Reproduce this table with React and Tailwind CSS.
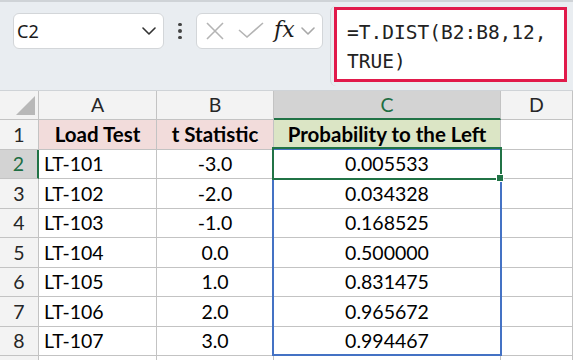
import React from "react";

const data = [
  ["LT-101", "-3.0", "0.005533"],
  ["LT-102", "-2.0", "0.034328"],
  ["LT-103", "-1.0", "0.168525"],
  ["LT-104", "0.0", "0.500000"],
  ["LT-105", "1.0", "0.831475"],
  ["LT-106", "2.0", "0.965672"],
  ["LT-107", "3.0", "0.994467"],
];

const rowHeights = ["h-[30px]", "h-[29px]", "h-[30px]", "h-[29px]", "h-[30px]", "h-[29px]", "h-[30px]", "h-[29px]"];

function Chevron({ className, color }) {
  return (
    <svg width="14" height="8" viewBox="0 0 14 8" className={className}>
      <path d="M1 1 L7 7 L13 1" fill="none" stroke={color} strokeWidth="1.6" strokeLinecap="round" strokeLinejoin="round" />
    </svg>
  );
}

export default function App() {
  const cell = "border-r border-b border-[#c3c3c3] flex items-center";
  return (
    <div className="w-[573px] h-[360px] overflow-hidden bg-white relative" style={{ fontFamily: "Lato, 'Open Sans', sans-serif" }}>
      {/* Toolbar */}
      <div className="h-[91px] bg-[#e9edf1] border-t-2 border-t-[#cfd3d7] border-b border-b-[#cfd3d7] flex items-start">
        <div className="ml-[13px] mt-[11px] w-[151px] h-[36px] bg-white border border-[#d3d6d9] rounded-[6px] flex items-center pl-[3px] pr-[7px] justify-between">
          <span className="text-[18px] text-[#1a1a1a]" style={{ fontFamily: "'Noto Sans', sans-serif" }}>C2</span>
          <Chevron color="#333" />
        </div>
        <div className="w-[32px] mt-[11px] h-[36px] flex flex-col items-center justify-center gap-[3px]">
          <span className="w-[3.5px] h-[3.5px] rounded-full bg-[#444]" />
          <span className="w-[3.5px] h-[3.5px] rounded-full bg-[#444]" />
          <span className="w-[3.5px] h-[3.5px] rounded-full bg-[#444]" />
        </div>
        <div className="mt-[11px] w-[127px] h-[36px] bg-white border border-[#d3d6d9] rounded-[6px] flex items-center pl-[8px]">
          <svg width="20" height="20" viewBox="0 0 20 20">
            <path d="M2 2 L18 18 M18 2 L2 18" stroke="#b4b4b4" strokeWidth="1.6" fill="none" />
          </svg>
          <svg width="26" height="18" viewBox="0 0 26 18" className="ml-[13px]">
            <path d="M1 8 L9 15 L25 1" stroke="#b4b4b4" strokeWidth="1.6" fill="none" />
          </svg>
          <span className="ml-[10px] text-[22px] italic text-[#1a1a1a] leading-none -mt-[2px]" style={{ fontFamily: "'DejaVu Serif', serif" }}>fx</span>
          <Chevron className="ml-[6px]" color="#a8a8a8" />
        </div>
        <div className="ml-[7px] mt-[4px] flex-1 h-[80px] border-l border-[#d3d6d9] rounded-l-[6px] pl-[3px] pt-[1px]">
          <div className="w-[233px] h-[75px] bg-white border-[3px] border-[#e11a4b] pl-[10px] pt-[8px] text-[19.5px] leading-[29px] text-[#222]" style={{ fontFamily: "'DejaVu Sans Mono', monospace" }}>
            <div>=T.DIST(B2:B8,12,</div>
            <div>TRUE)</div>
          </div>
        </div>
      </div>

      {/* Grid */}
      <div className="relative">
        <div className="grid grid-cols-[39px_118px_117px_227px_1fr] text-[19.5px] text-black">
          {/* header row */}
          <div className={`${cell} h-[29px] bg-[#f3f3f3] justify-end items-end pr-[3px] pb-[4px]`}>
            <svg width="19" height="19" viewBox="0 0 19 19"><path d="M19 0 L19 19 L0 19 Z" fill="#b8b8b8" /></svg>
          </div>
          <div className={`${cell} h-[29px] bg-[#f3f3f3] justify-center text-[#262626]`}>A</div>
          <div className={`${cell} h-[29px] bg-[#f3f3f3] justify-center text-[#262626]`}>B</div>
          <div className="h-[29px] border-r border-[#c3c3c3] border-b-2 border-b-[#217346] bg-[#d3d3d3] flex items-center justify-center text-[#1e6e43]">C</div>
          <div className={`${cell} h-[29px] bg-[#f3f3f3] justify-center text-[#262626]`}>D</div>

          {/* row 1 */}
          <div className={`${cell} ${rowHeights[0]} bg-[#f3f3f3] justify-center text-[#262626]`}>1</div>
          <div className={`${cell} ${rowHeights[0]} bg-[#f2dcdb] justify-center font-bold text-[20.5px]`}>Load Test</div>
          <div className={`${cell} ${rowHeights[0]} bg-[#f2dcdb] justify-center font-bold text-[20.5px]`}>t Statistic</div>
          <div className={`${cell} ${rowHeights[0]} bg-[#dbe5c5] justify-center font-bold text-[20.5px]`}>Probability to the Left</div>
          <div className={`${cell} ${rowHeights[0]}`}></div>

          {data.map((r, i) => {
            const h = rowHeights[i + 1];
            const sel = i === 0;
            return (
              <React.Fragment key={i}>
                <div
                  className={
                    sel
                      ? `${h} border-b border-[#c3c3c3] border-r-2 border-r-[#217346] bg-[#d3d3d3] flex items-center justify-center text-[#1e6e43]`
                      : `${cell} ${h} bg-[#f3f3f3] justify-center text-[#262626]`
                  }
                >
                  {i + 2}
                </div>
                <div className={`${cell} ${h} pl-[5px]`}>{r[0]}</div>
                <div className={`${cell} ${h} justify-center`}>{r[1]}</div>
                <div className={`${cell} ${h} justify-center`}>{r[2]}</div>
                <div className={`${cell} ${h}`}></div>
              </React.Fragment>
            );
          })}

          {/* row 9 partial */}
          <div className={`${cell} h-[29px] bg-[#f3f3f3]`}></div>
          <div className={`${cell} h-[29px]`}></div>
          <div className={`${cell} h-[29px]`}></div>
          <div className={`${cell} h-[29px]`}></div>
          <div className={`${cell} h-[29px]`}></div>
        </div>

        {/* range outline (blue) */}
        <div className="absolute left-[272px] top-[57px] w-[230px] h-[208px] border-2 border-[#4472c4] pointer-events-none" />
        {/* active cell (green) */}
        <div className="absolute left-[272px] top-[56px] w-[230px] h-[33px] border-2 border-[#217346] pointer-events-none" />
        <div className="absolute left-[496px] top-[83px] w-[8px] h-[8px] bg-[#217346] border border-white pointer-events-none" />
      </div>
    </div>
  );
}
